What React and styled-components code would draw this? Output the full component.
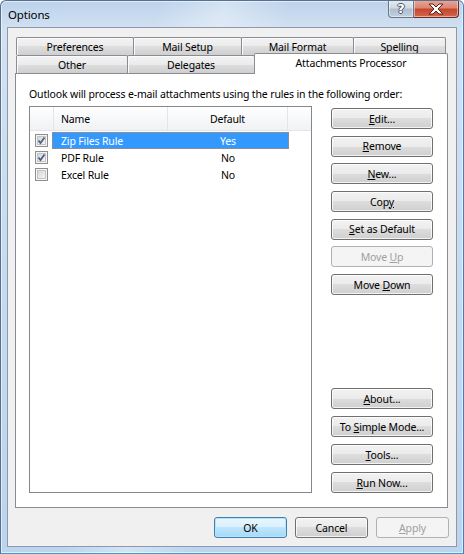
import React from "react";
import styled, { createGlobalStyle } from "styled-components";

const GlobalStyle = createGlobalStyle`
  html, body {
    margin: 0;
    padding: 0;
    background: #ffffff;
  }
  body {
    font-family: "Noto Sans", "Segoe UI", sans-serif;
    font-size: 10.5px;
    letter-spacing: -0.15px;
    color: #000;
  }
`;

const Window = styled.div`
  width: 464px;
  height: 554px;
  box-sizing: border-box;
  border: 1px solid #4e6a8c;
  border-color: #56708f #3d7fc0 #2fa3d3 #56708f;
  border-radius: 6px 6px 0 0;
  background: linear-gradient(
      100deg,
      rgba(255, 255, 255, 0) 28%,
      rgba(255, 255, 255, 0.35) 40%,
      rgba(255, 255, 255, 0) 52%
    ),
    linear-gradient(180deg, #bcd2eb 0%, #d2e1f2 5%, #c6d9ee 55%, #bdd4ee 100%);
  box-shadow: inset 0 0 0 1px rgba(255, 255, 255, 0.55);
  display: flex;
  flex-direction: column;
  overflow: hidden;
`;

const TitleBar = styled.div`
  height: 26px;
  display: flex;
  justify-content: space-between;
  align-items: flex-start;
`;

const Title = styled.div`
  padding: 6px 0 0 7px;
  line-height: 16px;
  font-size: 11.5px;
`;

const CaptionButtons = styled.div`
  display: flex;
  margin: -1px 4px 0 0;
`;

const CaptionButton = styled.div`
  width: ${(p) => p.$w}px;
  height: 18px;
  box-sizing: border-box;
  display: flex;
  align-items: center;
  justify-content: center;
  border: 1px solid ${(p) => (p.$close ? "#6b2a22" : "#6a7788")};
  border-top: none;
  border-radius: ${(p) => (p.$close ? "0 0 4px 0" : "0 0 0 4px")};
  background: ${(p) =>
    p.$close
      ? "linear-gradient(180deg, #eaa89a 0%, #dc8573 45%, #c6472f 55%, #d2664c 100%)"
      : "linear-gradient(180deg, #e6ecf2 0%, #d0dae5 45%, #aebfd0 55%, #c2d0de 100%)"};
  box-shadow: inset 0 0 0 1px rgba(255, 255, 255, 0.45);
  & + & {
    border-left: none;
  }
`;

const HelpGlyph = styled.span`
  font-family: "DejaVu Sans", sans-serif;
  font-size: 13px;
  font-weight: bold;
  line-height: 1;
  letter-spacing: 0;
  color: #ffffff;
  text-shadow: -1px 0 #4a5566, 1px 0 #4a5566, 0 -1px #4a5566, 0 1px #4a5566;
`;

const Client = styled.div`
  flex: 1;
  margin: 0 6px 6px;
  border: 1px solid #8d9aab;
  background: #f0f0f0;
  display: flex;
  flex-direction: column;
  padding: 9px 7px 8px 7px;
  min-height: 0;
`;

const TabStrip = styled.div`
  display: flex;
  flex-direction: column;
  padding: 0 1px;
`;

const TabRow = styled.div`
  display: flex;
  height: 18px;
`;

const Tab = styled.div`
  width: ${(p) => p.$w}px;
  flex-shrink: 0;
  box-sizing: border-box;
  border: 1px solid #898c95;
  border-bottom: none;
  margin-right: -1px;
  border-radius: 2px 2px 0 0;
  text-align: center;
  white-space: nowrap;
  line-height: 18px;
  background: linear-gradient(180deg, #f3f3f3 0%, #ebebeb 50%, #dedede 50%, #cfcfcf 100%);
  box-shadow: inset 1px 1px 0 #fbfbfb;
  ${(p) =>
    p.$active &&
    `
    position: relative;
    z-index: 1;
    margin-top: -2px;
    height: 21px;
    line-height: 19px;
    background: #ffffff;
    box-shadow: none;
  `}
`;

const Panel = styled.div`
  flex: 1;
  margin-right: 1px;
  border: 1px solid #898c95;
  background: #ffffff;
  display: flex;
  flex-direction: column;
  padding: 12px 14px 14px 13px;
  min-height: 0;
`;

const Intro = styled.div`
  line-height: 16px;
  white-space: nowrap;
`;

const Body = styled.div`
  flex: 1;
  display: flex;
  gap: 19px;
  margin-top: 4px;
  min-height: 0;
`;

const ListBox = styled.div`
  width: 283px;
  box-sizing: border-box;
  border: 1px solid #828790;
  background: #ffffff;
  display: flex;
  flex-direction: column;
`;

const ListHeader = styled.div`
  display: flex;
  height: 23px;
  border-bottom: 1px solid #e2e4e7;
  background: linear-gradient(180deg, #ffffff 0%, #f7f8f9 50%, #f1f2f4 100%);
  margin-bottom: 1px;
`;

const HeaderCell = styled.div`
  width: ${(p) => (p.$w ? `${p.$w}px` : "auto")};
  flex: ${(p) => (p.$w ? "none" : 1)};
  box-sizing: border-box;
  border-right: ${(p) => (p.$last ? "none" : "1px solid #e3e5e8")};
  padding-left: ${(p) => p.$pad || 0}px;
  text-align: ${(p) => p.$align || "left"};
  line-height: 24px;
`;

const Row = styled.div`
  display: flex;
  height: 17px;
  align-items: center;
`;

const CheckCell = styled.div`
  width: 22px;
  display: flex;
  align-items: center;
  padding-left: 5px;
  box-sizing: border-box;
`;

const RowBody = styled.div`
  width: 237px;
  height: 17px;
  box-sizing: border-box;
  display: flex;
  align-items: center;
  border: 1px ${(p) => (p.$selected ? "dotted #e0852a" : "solid transparent")};
  background: ${(p) => (p.$selected ? "#3399ff" : "transparent")};
  color: ${(p) => (p.$selected ? "#ffffff" : "#000000")};
`;

const Cell = styled.div`
  width: ${(p) => p.$w}px;
  box-sizing: border-box;
  padding-left: ${(p) => p.$pad || 0}px;
  text-align: ${(p) => p.$align || "left"};
  line-height: 16px;
  white-space: nowrap;
`;

const ButtonColumn = styled.div`
  width: 102px;
  display: flex;
  flex-direction: column;
  justify-content: space-between;
  padding: 2px 0 0;
`;

const ButtonGroup = styled.div`
  display: flex;
  flex-direction: column;
  gap: ${(p) => p.$gap}px;
`;

const Button = styled.button`
  width: ${(p) => (p.$w ? `${p.$w}px` : "100%")};
  height: 21px;
  box-sizing: border-box;
  padding: 0;
  font-family: inherit;
  font-size: 10.5px;
  letter-spacing: -0.15px;
  line-height: 18px;
  color: #000;
  border: 1px solid #707070;
  border-radius: 3px;
  background: linear-gradient(180deg, #f2f2f2 0%, #ebebeb 50%, #dddddd 50%, #cfcfcf 100%);
  box-shadow: inset 0 0 0 1px rgba(255, 255, 255, 0.75);
  white-space: nowrap;
  &:disabled {
    color: #a0a0a0;
    border-color: #adb2b5;
    background: #f4f4f4;
    box-shadow: none;
  }
  ${(p) =>
    p.$default &&
    `
    border-color: #3c7fb1;
    background: linear-gradient(180deg, #eaf6fd 0%, #d9f0fc 50%, #bee6fd 50%, #a7d9f5 100%);
    box-shadow: inset 0 0 0 1px #b8e3f8;
  `}
`;

const Footer = styled.div`
  display: flex;
  justify-content: flex-end;
  gap: 8px;
  margin-top: 9px;
`;

const CloseIcon = () => (
  <svg width="18" height="12" viewBox="0 0 18 12">
    <polygon
      points="2,1 6,1 9,4 12,1 16,1 11,6 16,11 12,11 9,8 6,11 2,11 7,6"
      fill="#ffffff"
      stroke="#5a2019"
      strokeWidth="1"
      strokeLinejoin="round"
    />
  </svg>
);

const CheckBox = ({ checked }) => (
  <svg width="13" height="13" viewBox="0 0 13 13">
    <defs>
      <linearGradient id="cbfill" x1="0" y1="0" x2="1" y2="1">
        <stop offset="0" stopColor="#d4d4d4" />
        <stop offset="1" stopColor="#f7f7f7" />
      </linearGradient>
    </defs>
    <rect x="0.5" y="0.5" width="12" height="12" fill="#f4f4f4" stroke="#8f8f8f" />
    <rect x="2.5" y="2.5" width="8" height="8" fill="url(#cbfill)" stroke="#c4c4c4" />
    {checked && (
      <polyline
        points="3.5,6.5 5.5,9 9.5,3.5"
        fill="none"
        stroke="#4c5f86"
        strokeWidth="1.8"
      />
    )}
  </svg>
);

const rules = [
  { name: "Zip Files Rule", def: "Yes", checked: true, selected: true },
  { name: "PDF Rule", def: "No", checked: true },
  { name: "Excel Rule", def: "No", checked: false },
];

const App = () => {
  return (
    <>
      <GlobalStyle />
      <Window>
        <TitleBar>
          <Title>Options</Title>
          <CaptionButtons>
            <CaptionButton $w={26}>
              <HelpGlyph>?</HelpGlyph>
            </CaptionButton>
            <CaptionButton $w={45} $close>
              <CloseIcon />
            </CaptionButton>
          </CaptionButtons>
        </TitleBar>
        <Client>
          <TabStrip>
            <TabRow>
              <Tab $w={118}>Preferences</Tab>
              <Tab $w={109}>Mail Setup</Tab>
              <Tab $w={113}>Mail Format</Tab>
              <Tab $w={93}>Spelling</Tab>
            </TabRow>
            <TabRow>
              <Tab $w={112}>Other</Tab>
              <Tab $w={128}>Delegates</Tab>
              <Tab $w={194} $active>
                Attachments Processor
              </Tab>
            </TabRow>
          </TabStrip>
          <Panel>
            <Intro>
              Outlook will process e-mail attachments using the rules in the
              following order:
            </Intro>
            <Body>
              <ListBox>
                <ListHeader>
                  <HeaderCell $w={24} />
                  <HeaderCell $w={114} $pad={7}>
                    Name
                  </HeaderCell>
                  <HeaderCell $w={120} $align="center">
                    Default
                  </HeaderCell>
                  <HeaderCell $last />
                </ListHeader>
                {rules.map((r) => (
                  <Row key={r.name}>
                    <CheckCell>
                      <CheckBox checked={r.checked} />
                    </CheckCell>
                    <RowBody $selected={r.selected}>
                      <Cell $w={115} $pad={8}>
                        {r.name}
                      </Cell>
                      <Cell $w={120} $align="center">
                        {r.def}
                      </Cell>
                    </RowBody>
                  </Row>
                ))}
              </ListBox>
              <ButtonColumn>
                <ButtonGroup $gap={6.7}>
                  <Button>
                    <u>E</u>dit...
                  </Button>
                  <Button>
                    <u>R</u>emove
                  </Button>
                  <Button>
                    <u>N</u>ew...
                  </Button>
                  <Button>
                    Cop<u>y</u>
                  </Button>
                  <Button>
                    <u>S</u>et as Default
                  </Button>
                  <Button disabled>
                    Move <u>U</u>p
                  </Button>
                  <Button>
                    Move <u>D</u>own
                  </Button>
                </ButtonGroup>
                <ButtonGroup $gap={7}>
                  <Button>
                    <u>A</u>bout...
                  </Button>
                  <Button>
                    To <u>S</u>imple Mode...
                  </Button>
                  <Button>
                    <u>T</u>ools...
                  </Button>
                  <Button>
                    <u>R</u>un Now...
                  </Button>
                </ButtonGroup>
              </ButtonColumn>
            </Body>
          </Panel>
          <Footer>
            <Button $w={73} $default>
              OK
            </Button>
            <Button $w={73}>Cancel</Button>
            <Button $w={73} disabled>
              <u>A</u>pply
            </Button>
          </Footer>
        </Client>
      </Window>
    </>
  );
};

export default App;
